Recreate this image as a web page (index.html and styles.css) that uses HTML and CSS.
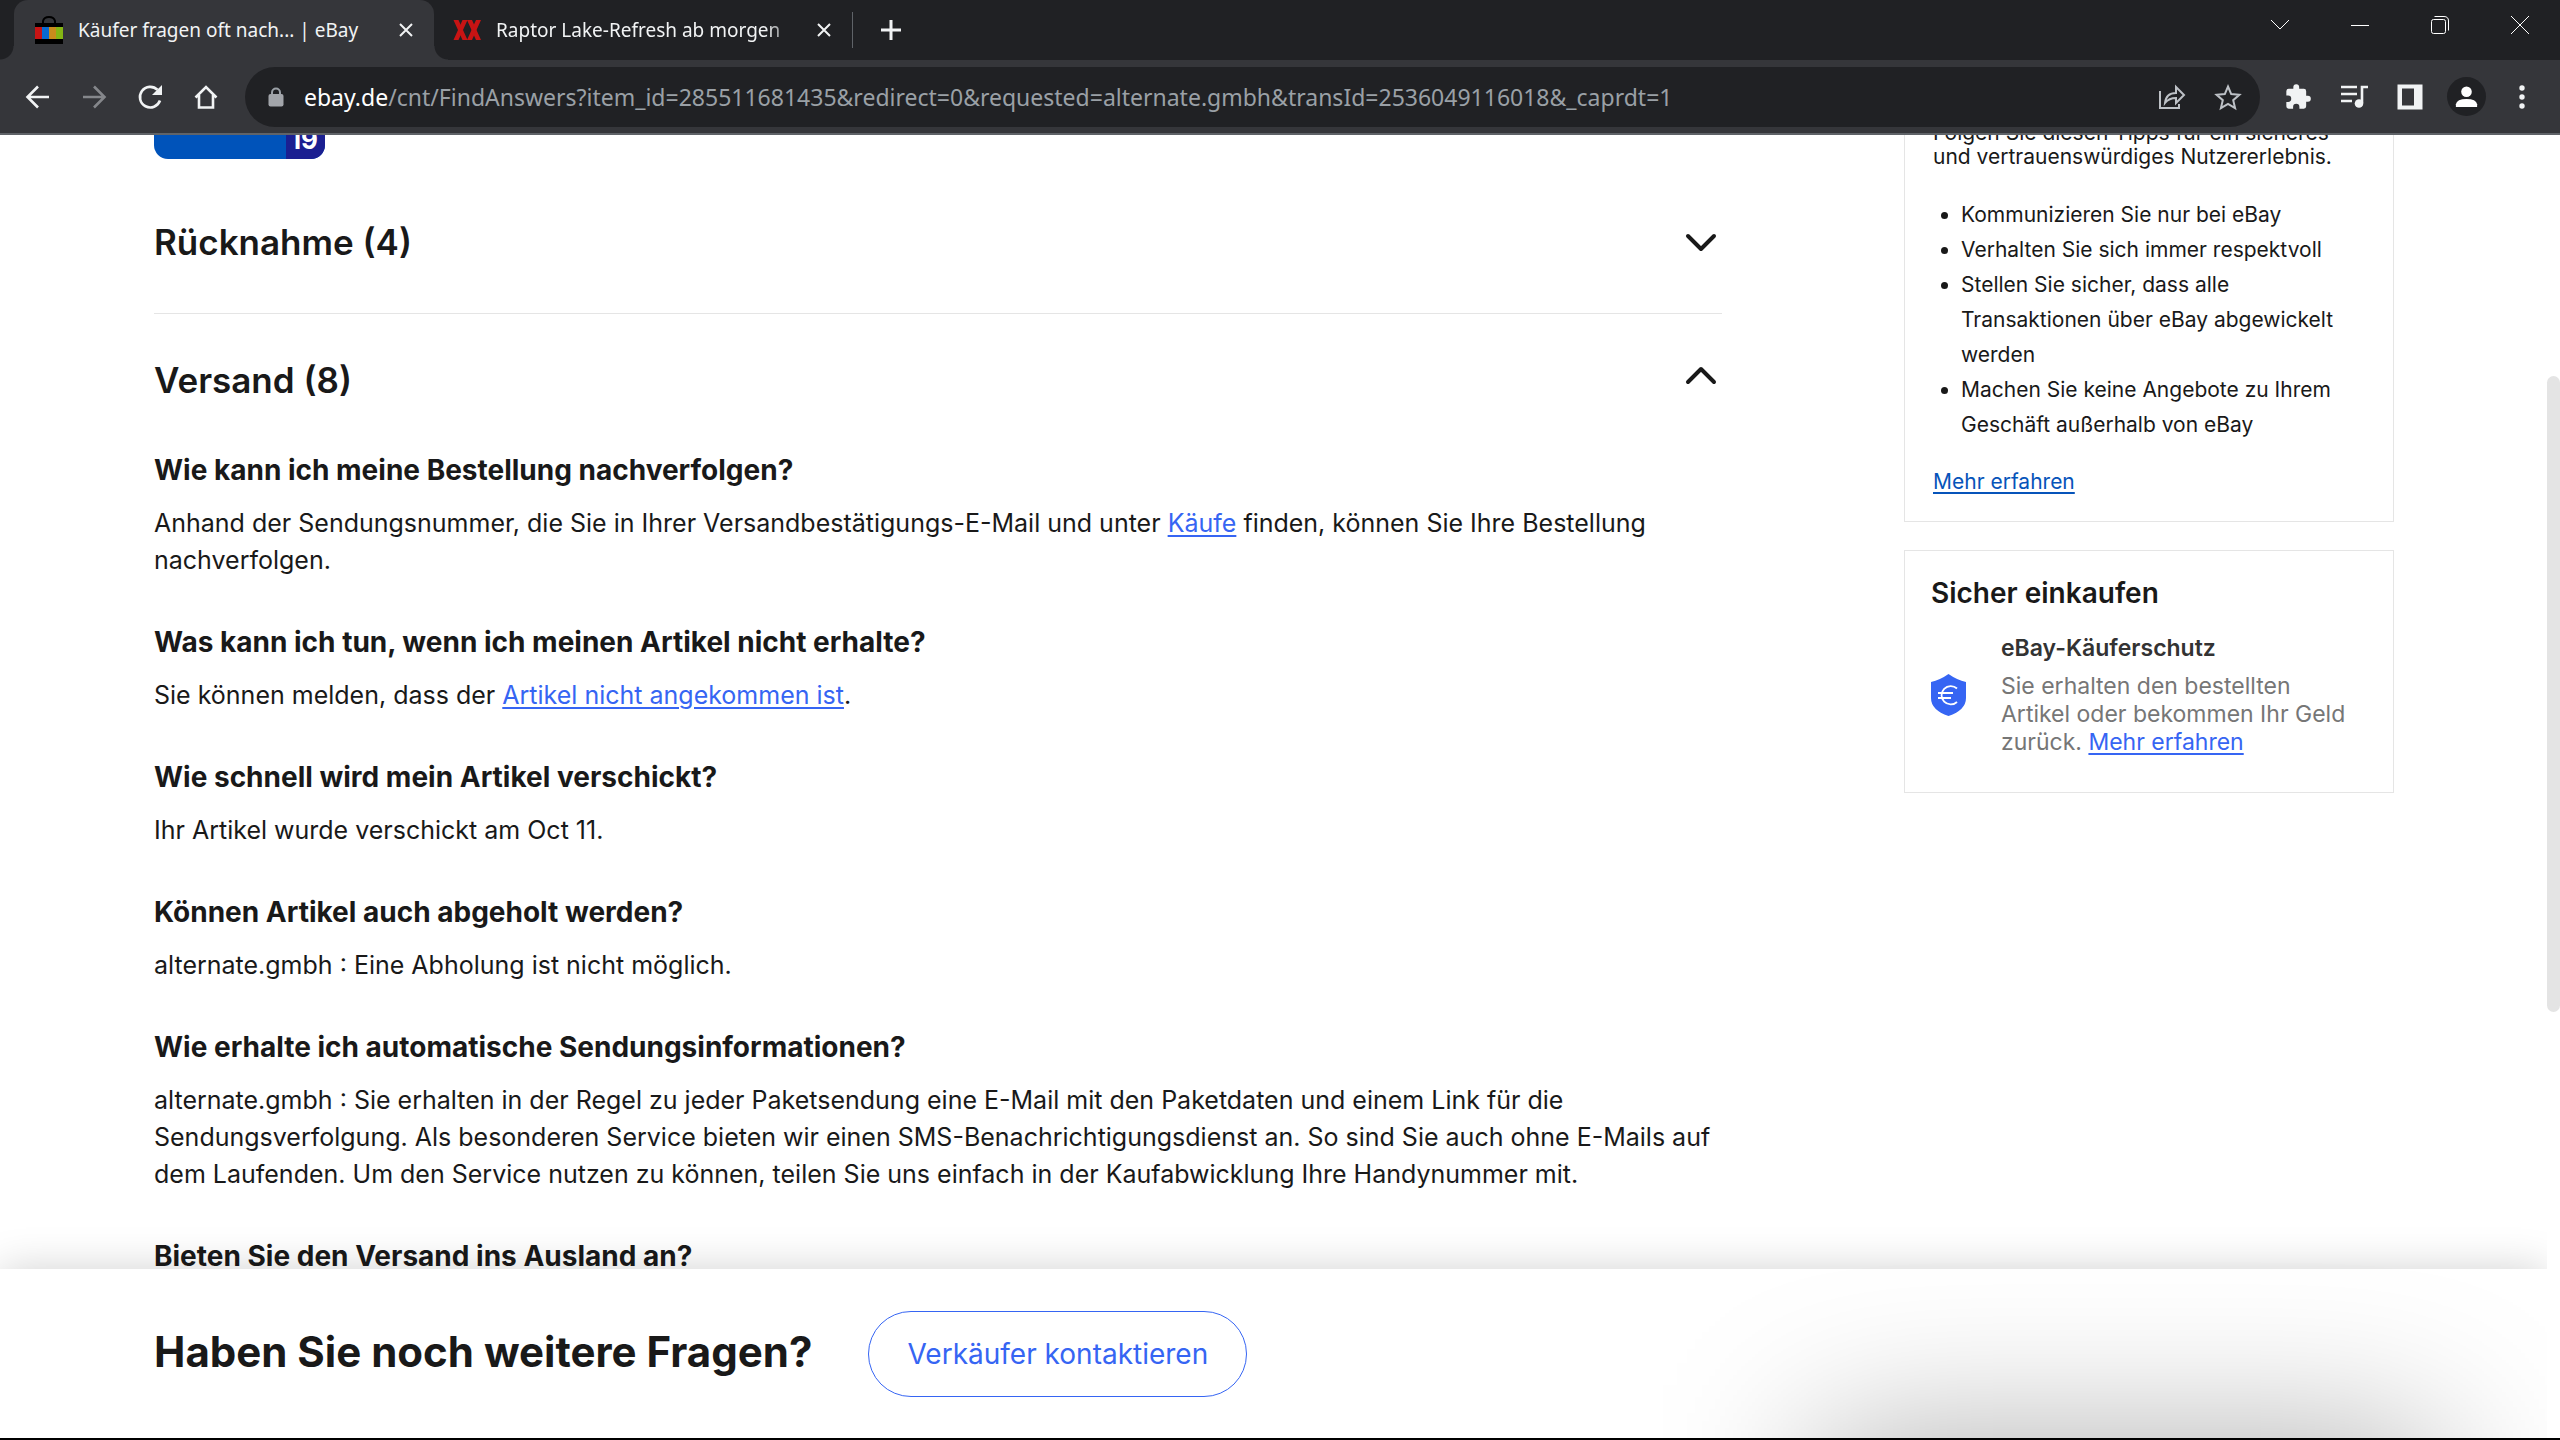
FILE: index.html
```html
<!DOCTYPE html>
<html lang="de">
<head>
<meta charset="utf-8">
<title>Käufer fragen oft nach... | eBay</title>
<link rel="stylesheet" href="styles.css">
</head>
<body>
<header class="browser">
  <div class="tabstrip">
    <div class="tab tab-active">
      <svg class="favicon" viewBox="0 0 28 28"><path d="M8 8V5q1-4 6-4t6 4v3" fill="none" stroke="#000" stroke-width="2"/><path d="M0 7h28v21H0z" fill="#000"/><path d="M0 11h7v12H0z" fill="#c81414"/><path d="M7 11h7v12H7z" fill="#0a6ad0"/><path d="M14 11h7v12h-7z" fill="#c98c1c"/><path d="M21 11h7v12h-7z" fill="#84b614"/></svg>
      <span class="tab-title">Käufer fragen oft nach... | eBay</span>
      <button class="tab-close" aria-label="Tab schließen"><svg width="14" height="14" viewBox="0 0 14 14"><path d="M1 1l12 12M13 1L1 13"/></svg></button>
    </div>
    <div class="tab">
      <svg class="favicon" viewBox="0 0 28 28"><path d="M0.500 4h5l9 20h-5zM14 4h5l9 20h-5z" fill="#c81414"/><path d="M9.500 4h5L5.500 24h-5zM23 4h5l-9 20h-5z" fill="#c81414"/></svg>
      <span class="tab-title tab-fade">Raptor Lake-Refresh ab morgen</span>
      <button class="tab-close" aria-label="Tab schließen"><svg width="14" height="14" viewBox="0 0 14 14"><path d="M1 1l12 12M13 1L1 13"/></svg></button>
    </div>
    <button class="new-tab" aria-label="Neuer Tab"><svg width="22" height="22" viewBox="0 0 22 22"><path d="M11 1v20M1 11h20"/></svg></button>
    <div class="window-controls">
      <button aria-label="Tabs suchen"><svg width="20" height="20" viewBox="0 0 20 20"><path d="M1 5l9 9 9-9"/></svg></button>
      <button aria-label="Minimieren"><svg width="20" height="20" viewBox="0 0 20 20"><path d="M1 10.500h18"/></svg></button>
      <button aria-label="Verkleinern"><svg width="20" height="20" viewBox="0 0 20 20"><rect x="1.500" y="4.500" width="14" height="14" rx="2"/><path d="M4.500 1.500H14q4.500 0 4.500 4.500v9.500"/></svg></button>
      <button aria-label="Schließen"><svg width="20" height="20" viewBox="0 0 20 20"><path d="M1 1l18 18M19 1L1 19"/></svg></button>
    </div>
  </div>
  <div class="toolbar">
    <button class="tool" aria-label="Zurück"><svg viewBox="0 0 28 28"><path d="M25 14H4M14 3.500L3.500 14 14 24.500" class="line"/></svg></button>
    <button class="tool dim" aria-label="Vorwärts"><svg viewBox="0 0 28 28"><path d="M3 14h21M14 3.500L24.500 14 14 24.500" class="line"/></svg></button>
    <button class="tool" aria-label="Neu laden"><svg viewBox="0 0 28 28"><path d="M24 17.500A10.300 10.300 0 1 1 21.500 6.800" class="line"/><path d="M26 2v10H16z" fill="#f1f3f4"/></svg></button>
    <button class="tool" aria-label="Startseite"><svg viewBox="0 0 28 28"><path d="M3.500 14.500L14 4l10.500 10.500M7 12v12.500h14V12" class="line"/></svg></button>
    <div class="omnibox">
      <svg class="lock" width="16" height="20" viewBox="0 0 16 20"><path d="M4 9V5.500a4 4 0 0 1 8 0V9" fill="none" stroke="#9aa0a6" stroke-width="2"/><rect x="0.500" y="7" width="15" height="12.500" rx="2" fill="#a2a5aa"/></svg>
      <div class="url" role="textbox" aria-label="Adresse"><span class="host">ebay.de</span>/cnt/FindAnswers?item_id=285511681435&amp;redirect=0&amp;requested=alternate.gmbh&amp;transId=2536049116018&amp;_caprdt=1</div>
      <button class="tool soft" aria-label="Teilen"><svg viewBox="0 0 28 28"><path d="M2 8v17h19v-4M7 20q1-10 11-10V4l8 8-8 8v-5q-7 0-11 5z" class="thin"/></svg></button>
      <button class="tool soft" aria-label="Lesezeichen"><svg viewBox="0 0 28 28"><path d="M14 3.500l3.200 7.600 8.200.7-6.200 5.400 1.900 8L14 21l-7.100 4.200 1.900-8-6.200-5.400 8.200-.7z" class="thin"/></svg></button>
    </div>
    <button class="tool" aria-label="Erweiterungen"><svg viewBox="0 0 24 24"><path fill="#f1f3f4" d="M20.500 11H19V7a2 2 0 0 0-2-2h-4V3.500a2.500 2.500 0 0 0-5 0V5H4a2 2 0 0 0-2 2v3.800h1.500a2.700 2.700 0 0 1 0 5.400H2V20a2 2 0 0 0 2 2h3.800v-1.500a2.700 2.700 0 0 1 5.400 0V22H17a2 2 0 0 0 2-2v-4h1.500a2.500 2.500 0 0 0 0-5z"/></svg></button>
    <button class="tool" aria-label="Mediensteuerung"><svg viewBox="0 0 28 28"><path d="M1 4h16M1 11h16M1 18h11M22 20V4h6" class="line"/><circle cx="19" cy="20.500" r="4.300" fill="#f1f3f4"/></svg></button>
    <button class="tool" aria-label="Seitenleiste"><svg viewBox="0 0 28 28"><path fill="#f1f3f4" fill-rule="evenodd" d="M1.500 1.500h25v25h-25zM6 5.500v17h12v-17z"/></svg></button>
    <button class="tool" aria-label="Profil"><span class="avatar"><svg viewBox="0 0 28 28"><circle cx="14" cy="9" r="5.500" fill="#fff"/><path d="M3 25v-3q1-5.500 11-5.500T25 22v3z" fill="#fff"/></svg></span></button>
    <button class="tool" aria-label="Menü"><svg viewBox="0 0 28 28" fill="#f1f3f4"><circle cx="14" cy="5" r="2.700"/><circle cx="14" cy="14" r="2.700"/><circle cx="14" cy="23" r="2.700"/></svg></button>
  </div>
</header>
<div class="viewport">
  <div class="page">
    <div class="content">
      <main class="faq">
        <div class="badge"><span>i9</span></div>
        <section class="group group-closed">
          <h2><button class="group-toggle" aria-expanded="false">Rücknahme (4)<svg width="32" height="32" viewBox="0 0 32 32"><path d="M3 10l13 13 13-13"/></svg></button></h2>
        </section>
        <section class="group">
          <h2><button class="group-toggle" aria-expanded="true">Versand (8)<svg width="32" height="32" viewBox="0 0 32 32"><path d="M3 18L16 5l13 13"/></svg></button></h2>
          <div class="answers">
            <article><h3>Wie kann ich meine Bestellung nachverfolgen?</h3>
              <p>Anhand der Sendungsnummer, die Sie in Ihrer Versandbestätigungs-E-Mail und unter <a href="#">Käufe</a> finden, können Sie Ihre Bestellung nachverfolgen.</p></article>
            <article><h3>Was kann ich tun, wenn ich meinen Artikel nicht erhalte?</h3>
              <p>Sie können melden, dass der <a href="#">Artikel nicht angekommen ist</a>.</p></article>
            <article><h3>Wie schnell wird mein Artikel verschickt?</h3>
              <p>Ihr Artikel wurde verschickt am Oct 11.</p></article>
            <article><h3>Können Artikel auch abgeholt werden?</h3>
              <p>alternate.gmbh : Eine Abholung ist nicht möglich.</p></article>
            <article><h3>Wie erhalte ich automatische Sendungsinformationen?</h3>
              <p>alternate.gmbh : Sie erhalten in der Regel zu jeder Paketsendung eine E-Mail mit den Paketdaten und einem Link für die Sendungsverfolgung. Als besonderen Service bieten wir einen SMS-Benachrichtigungsdienst an. So sind Sie auch ohne E-Mails auf dem Laufenden. Um den Service nutzen zu können, teilen Sie uns einfach in der Kaufabwicklung Ihre Handynummer mit.</p></article>
            <article><h3>Bieten Sie den Versand ins Ausland an?</h3></article>
          </div>
        </section>
      </main>
      <aside class="side">
        <section class="card tips">
          <p>Folgen Sie diesen Tipps für ein sicheres und vertrauenswürdiges Nutzererlebnis.</p>
          <ul>
            <li>Kommunizieren Sie nur bei eBay</li>
            <li>Verhalten Sie sich immer respektvoll</li>
            <li>Stellen Sie sicher, dass alle Transaktionen über eBay abgewickelt werden</li>
            <li>Machen Sie keine Angebote zu Ihrem Geschäft außerhalb von eBay</li>
          </ul>
          <a href="#">Mehr erfahren</a>
        </section>
        <section class="card safety">
          <h2>Sicher einkaufen</h2>
          <div class="protection">
            <svg width="35" height="42" viewBox="0 0 35 42"><path d="M17.500 0Q26 6 35 8v16q0 12-17.500 18Q0 36 0 24V8q9-2 17.500-8z" fill="#3665f3"/><path d="M26 14.500A9.200 9.200 0 1 0 26 28M7 19h15M7 24h13" fill="none" stroke="#fff" stroke-width="1.800"/></svg>
            <div>
              <h3>eBay-Käuferschutz</h3>
              <p>Sie erhalten den bestellten Artikel oder bekommen Ihr Geld zurück. <a href="#">Mehr erfahren</a></p>
            </div>
          </div>
        </section>
      </aside>
    </div>
    <footer class="contact">
      <h2>Haben Sie noch weitere Fragen?</h2>
      <button class="contact-button">Verkäufer kontaktieren</button>
    </footer>
  </div>
  <div class="scrollbar"><div class="thumb"></div></div>
</div>
</body>
</html>
```
FILE: styles.css
```css
* { box-sizing: border-box; }
body {
  margin: 0;
  height: 100vh;
  display: flex;
  flex-direction: column;
  overflow: hidden;
  background: #fff;
  border-bottom: 2px solid #000;
  color: #191919;
  font-family: Inter, "Liberation Sans", sans-serif;
}
h2, h3, p, ul { margin: 0; padding: 0; }
button {
  border: 0;
  padding: 0;
  background: none;
  color: inherit;
  font: inherit;
}
svg { display: block; flex: none; }

/* Browser window */
.browser {
  flex: none;
  background: #202124;
  color: #f1f3f4;
  font-family: "Noto Sans", "Open Sans", sans-serif;
}
.tabstrip {
  display: flex;
  align-items: center;
  height: 60px;
  padding-left: 14px;
}
.tab {
  position: relative;
  display: flex;
  align-items: center;
  width: 418px;
  height: 60px;
  padding: 0 21px 0 19px;
  gap: 15px;
  font-size: 19px;
  white-space: nowrap;
}
.tab-active {
  width: 420px;
  padding-left: 21px;
  background: #35363a;
  border-radius: 14px 14px 0 0;
}
.tab-active::before, .tab-active::after {
  content: "";
  position: absolute;
  bottom: 0;
  width: 14px;
  height: 14px;
}
.tab-active::before {
  left: -14px;
  background: radial-gradient(circle at 0 0, #202124 13px, #35363a 14px);
}
.tab-active::after {
  right: -14px;
  background: radial-gradient(circle at 100% 0, #202124 13px, #35363a 14px);
}
.favicon { width: 28px; height: 28px; }
.tab-title { flex: 1; min-width: 0; overflow: hidden; }
.tab-fade {
  -webkit-mask-image: linear-gradient(to right, #000 88%, transparent);
  mask-image: linear-gradient(to right, #000 88%, transparent);
}
.tab-close svg, .new-tab svg { fill: none; stroke: #f1f3f4; stroke-width: 2; }
.new-tab svg { stroke-width: 3; }
.new-tab {
  display: flex;
  align-items: center;
  height: 36px;
  padding-left: 27px;
  border-left: 1px solid #5f6368;
}
.window-controls { display: flex; margin-left: auto; align-self: flex-start; }
.window-controls button {
  display: grid;
  place-items: center;
  width: 80px;
  height: 50px;
}
.window-controls svg { fill: none; stroke: #fff; stroke-width: 1; }
.toolbar {
  display: flex;
  align-items: center;
  height: 75px;
  padding: 0 10px;
  background: #35363a;
  border-bottom: 2px solid #5f6368;
}
.tool {
  flex: none;
  display: grid;
  place-items: center;
  width: 56px;
  height: 56px;
}
.tool svg { width: 28px; height: 28px; }
.line { fill: none; stroke: #f1f3f4; stroke-width: 2.6; }
.thin { fill: none; stroke: #bdc1c6; stroke-width: 2; }
.dim .line { stroke: #85878b; }
.omnibox {
  flex: 1;
  min-width: 0;
  display: flex;
  align-items: center;
  height: 60px;
  margin: 0 10px 0 11px;
  padding: 0 4px 0 23px;
  border-radius: 30px;
  background: #202124;
}
.url {
  flex: 1;
  min-width: 0;
  margin-left: 20px;
  overflow: hidden;
  white-space: nowrap;
  color: #9aa0a6;
  font-size: 23px;
}
.host { color: #fff; }
.avatar {
  display: grid;
  place-items: center;
  width: 39px;
  height: 39px;
  border-radius: 50%;
  background: #202124;
}
.avatar svg { width: 27px; height: 27px; }

/* Page */
.viewport { flex: 1; min-height: 0; display: flex; }
.page {
  flex: 1;
  min-width: 0;
  display: flex;
  flex-direction: column;
  overflow: hidden;
}
.content {
  flex: 1;
  min-height: 0;
  overflow: hidden;
  display: grid;
  grid-template-columns: minmax(0, 1fr) 490px;
  gap: 182px;
  padding: 0 153px 0 154px;
}
a { color: #3665f3; text-underline-offset: 3px; text-decoration-thickness: 2px; }
.badge {
  display: flex;
  justify-content: flex-end;
  align-items: flex-end;
  width: 171px;
  height: 24px;
  margin-bottom: 61px;
  overflow: hidden;
  border-radius: 0 0 14px 14px;
  background: #0053ba;
}
.badge span {
  width: 39px;
  padding-left: 8px;
  background: #1b1f91;
  color: #fff;
  font: 700 26px/38px Inter, sans-serif;
}
.group-closed {
  padding-bottom: 49px;
  margin-bottom: 44px;
  border-bottom: 1px solid #e5e5e5;
}
.group h2 { font-size: 35px; line-height: 44px; font-weight: 600; }
.group-toggle {
  display: flex;
  justify-content: space-between;
  align-items: center;
  width: 100%;
  padding-right: 5px;
}
.group-toggle svg {
  fill: none;
  stroke: #191919;
  stroke-width: 4;
  stroke-linecap: round;
  stroke-linejoin: round;
}
.answers { display: grid; gap: 45px; margin-top: 50px; }
.answers h3 {
  margin-bottom: 16px;
  font-size: 28px;
  line-height: 37px;
  font-weight: 700;
}
.answers p { font-size: 25px; line-height: 37px; }

.side { margin-top: -42px; }
.card { border: 1px solid #e5e5e5; }
.tips {
  margin-bottom: 28px;
  padding: 27px 28px;
  font-size: 21px;
  line-height: 24px;
}
.tips ul {
  margin: 28px 0;
  padding-left: 28px;
  line-height: 35px;
}
.tips a { display: block; color: #0654ba; }
.safety { padding: 24px 40px 36px 26px; }
.safety h2 { font-size: 28px; line-height: 36px; font-weight: 600; }
.protection {
  display: flex;
  align-items: center;
  gap: 35px;
  margin-top: 23px;
  font-size: 23px;
  line-height: 28px;
}
.protection h3 {
  margin-bottom: 10px;
  color: #333;
  font-size: 23px;
  font-weight: 600;
}
.protection p { color: #767676; }

.contact {
  position: relative;
  flex: none;
  display: flex;
  align-items: center;
  gap: 56px;
  padding: 42px 153px 41px 154px;
  background: #fff;
  box-shadow: 0 0 40px rgba(0, 0, 0, 0.18);
  clip-path: inset(-60px 0 0 0);
}
.contact::after {
  content: "";
  position: absolute;
  top: 100%;
  right: 110px;
  width: 620px;
  height: 400px;
  background: rgba(0, 0, 0, 0.32);
  filter: blur(80px);
}
.contact h2 {
  padding-bottom: 4px;
  font-size: 42px;
  line-height: 52px;
  font-weight: 700;
}
.contact-button {
  height: 86px;
  padding: 0 38px;
  border: 1px solid #3665f3;
  border-radius: 43px;
  background: #fff;
  color: #3665f3;
  font-size: 28px;
}
.scrollbar {
  flex: none;
  width: 13px;
  display: grid;
  grid-template-rows: 241fr 636fr 426fr;
}
.thumb { grid-row: 2; border-radius: 7px; background: #e4e4e4; }
```
